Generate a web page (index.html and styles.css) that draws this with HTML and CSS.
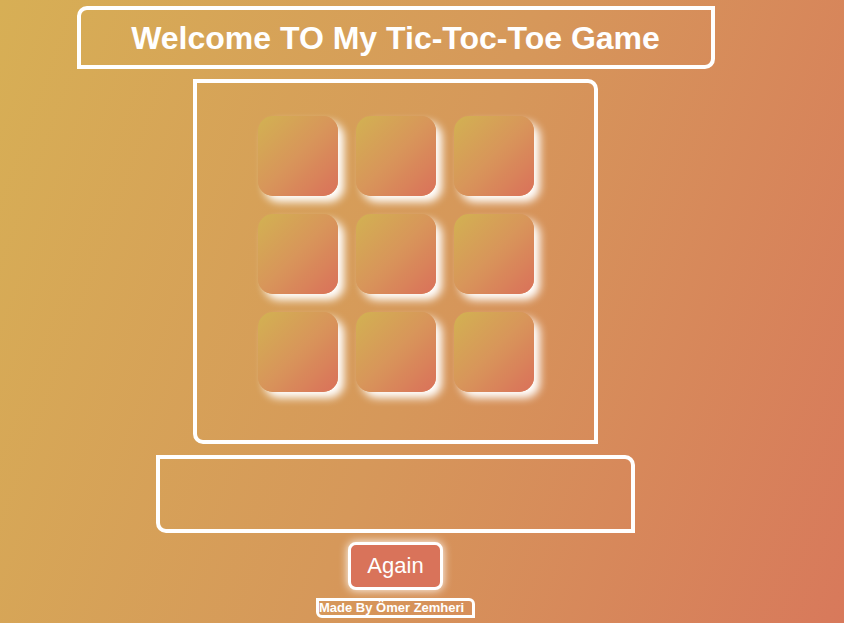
FILE: index.html
```html
<!DOCTYPE html>
<html>
<head>
<meta charset="utf-8">
<link rel="stylesheet" href="styles.css">
</head>
<body>
<div class="page">
  <h1 class="title">Welcome TO My Tic-Toc-Toe Game</h1>
  <div class="board">
    <div class="grid">
      <div class="cell"></div><div class="cell"></div><div class="cell"></div>
      <div class="cell"></div><div class="cell"></div><div class="cell"></div>
      <div class="cell"></div><div class="cell"></div><div class="cell"></div>
    </div>
  </div>
  <div class="result"></div>
  <button class="again">Again</button>
  <div class="footer">Made By Ömer Zemheri</div>
</div>
</body>
</html>
```
FILE: styles.css
```css
html, body {
  margin: 0;
  padding: 0;
  height: 100%;
}
body {
  background: linear-gradient(110deg, #d7af55 0%, #d6985a 50%, #d8795b 100%);
  font-family: "Liberation Sans", Arial, sans-serif;
  color: #fff;
  overflow: hidden;
}
.page {
  width: 791px;
  display: flex;
  flex-direction: column;
  align-items: center;
  padding-top: 6px;
}
.title {
  box-sizing: border-box;
  width: 638px;
  height: 63px;
  margin: 0;
  border: 4px solid #fff;
  border-radius: 10px 0 10px 0;
  font-size: 32px;
  font-weight: bold;
  text-align: center;
  line-height: 56px;
}
.board {
  box-sizing: border-box;
  width: 405px;
  height: 365px;
  margin-top: 10px;
  border: 4px solid #fff;
  border-radius: 0 10px 0 10px;
  padding: 33px 0 0 61px;
}
.grid {
  display: grid;
  grid-template-columns: repeat(3, 80px);
  grid-auto-rows: 80px;
  gap: 18px;
}
.cell {
  border-radius: 15px;
  background: linear-gradient(135deg, #d2b252 0%, #d8955a 50%, #da705a 100%);
  box-shadow: 6px 6px 8px #fff;
}
.result {
  box-sizing: border-box;
  width: 479px;
  height: 78px;
  margin-top: 11px;
  border: 4px solid #fff;
  border-radius: 0 10px 0 10px;
}
.again {
  box-sizing: border-box;
  width: 95px;
  height: 48px;
  margin-top: 9px;
  background: #d9735a;
  border: 3px solid #fff;
  border-radius: 8px;
  box-shadow: 0 0 10px #fff;
  color: #fff;
  font-family: "Liberation Sans", Arial, sans-serif;
  font-size: 22px;
  padding: 0;
}
.footer {
  box-sizing: border-box;
  margin-top: 8px;
  height: 20px;
  width: 159px;
  border: 3px solid #fff;
  border-radius: 0 6px 0 6px;
  font-size: 13px;
  font-weight: bold;
  line-height: 13px;
  padding-left: 0;
  white-space: nowrap;
}
```
